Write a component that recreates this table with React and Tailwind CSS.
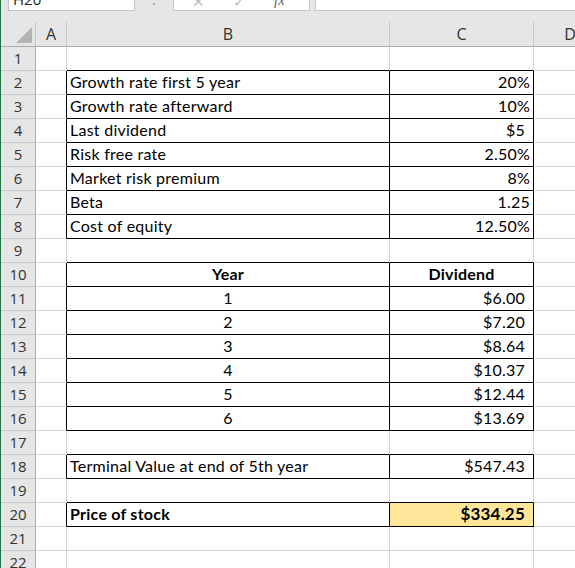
import React from "react";

const font = { fontFamily: "Lato, 'Open Sans', sans-serif" };

const rows = {
  2: { b: "Growth rate first 5 year", c: "20%" },
  3: { b: "Growth rate afterward", c: "10%" },
  4: { b: "Last dividend", c: "$5", pad: true },
  5: { b: "Risk free rate", c: "2.50%" },
  6: { b: "Market risk premium", c: "8%" },
  7: { b: "Beta", c: "1.25" },
  8: { b: "Cost of equity", c: "12.50%" },
  10: { b: "Year", c: "Dividend", header: true },
  11: { b: "1", c: "$6.00", center: true, pad: true },
  12: { b: "2", c: "$7.20", center: true, pad: true },
  13: { b: "3", c: "$8.64", center: true, pad: true },
  14: { b: "4", c: "$10.37", center: true, pad: true },
  15: { b: "5", c: "$12.44", center: true, pad: true },
  16: { b: "6", c: "$13.69", center: true, pad: true },
  18: { b: "Terminal Value at end of 5th year", c: "$547.43", pad: true },
  20: { b: "Price of stock", c: "$334.25", pad: true, total: true },
};

function inTable(r) {
  return !!rows[r];
}

function Row({ n }) {
  const d = rows[n];
  const boxed = inTable(n);
  const above = inTable(n + 1);
  const edge = boxed || above ? "border-b-black" : "border-b-[#d4d4d4]";
  const rightB = boxed ? "border-r-black" : "border-r-[#d4d4d4]";

  let bAlign = "justify-start pl-[3px]";
  let cAlign = d && d.pad ? "justify-end pr-[8px]" : "justify-end pr-[3px]";
  if (d && (d.header || d.center)) bAlign = "justify-center";
  if (d && d.header) cAlign = "justify-center";
  const bold = d && (d.header || d.total) ? "font-bold" : "";

  return (
    <div className="flex h-[24px]">
      <div className="w-[35px] shrink-0 flex items-center justify-center bg-[#e6e6e6] border-r border-b border-r-[#ababab] border-b-[#c8c8c8] text-[15px] text-[#333]" style={{ fontFamily: "'Open Sans', sans-serif" }}>
        {n}
      </div>
      <div className={`w-[31px] shrink-0 border-r border-b border-b-[#d4d4d4] ${rightB}`} />
      <div className={`w-[323px] shrink-0 flex items-end border-r border-b text-[16px] tracking-[0.25px] text-black ${rightB} ${edge} ${bAlign} ${bold}`} style={font}>
        {d ? d.b : ""}
      </div>
      <div className={`w-[144px] shrink-0 flex items-end border-r border-b tracking-[0.2px] text-black ${rightB} ${edge} ${cAlign} ${bold} ${d && d.total ? "bg-[#ffe699] text-[17px]" : "text-[16px]"}`} style={font}>
        {d ? d.c : ""}
      </div>
      <div className="flex-1 border-b border-b-[#d4d4d4]" />
    </div>
  );
}

export default function App() {
  const nums = [];
  for (let i = 1; i <= 22; i++) nums.push(i);

  return (
    <div className="w-[575px] h-[568px] overflow-hidden bg-white border-l border-l-[#217346]">
      <div className="h-[22px] bg-[#e6e6e6] flex items-start">
        <div className="ml-[7px] w-[127px] h-[11px] bg-white border border-t-0 border-[#c6c6c6] overflow-hidden">
          <div className="-mt-[12px] pl-[4px] text-[15px] text-[#222]" style={{ fontFamily: "'Open Sans', sans-serif" }}>H20</div>
        </div>
        <div className="w-[38px] h-[11px] flex justify-center overflow-hidden">
          <div className="-mt-[12px] text-[14px] text-[#999]">⋮</div>
        </div>
        <div className="w-[137px] h-[11px] bg-white border border-t-0 border-[#c6c6c6] overflow-hidden flex items-start text-[#bdbdbd]">
          <div className="ml-[18px] -mt-[10px] text-[15px]">✕</div>
          <div className="ml-[28px] -mt-[10px] text-[15px]">✓</div>
          <div className="ml-[28px] -mt-[11px] text-[15px] italic text-[#666]" style={{ fontFamily: "'Liberation Serif', serif" }}>fx</div>
        </div>
        <div className="ml-[5px] flex-1 h-[11px] bg-white border border-t-0 border-r-0 border-[#c6c6c6]" />
      </div>
      <div className="flex h-[25px] bg-[#e6e6e6] border-b border-b-[#ababab] text-[16px] text-[#333]" style={{ fontFamily: "'Open Sans', sans-serif" }}>
        <div className="w-[35px] shrink-0 border-r border-r-[#c6c6c6] flex items-end justify-end pr-[3px] pb-[3px]">
          <svg width="16" height="16" viewBox="0 0 16 16">
            <polygon points="16,0 16,16 0,16" fill="#b4b4b4" />
          </svg>
        </div>
        <div className="w-[31px] shrink-0 border-r border-r-[#c6c6c6] flex items-center justify-center">A</div>
        <div className="w-[323px] shrink-0 border-r border-r-[#c6c6c6] flex items-center justify-center">B</div>
        <div className="w-[144px] shrink-0 border-r border-r-[#c6c6c6] flex items-center justify-center">C</div>
        <div className="w-[72px] shrink-0 flex items-center justify-center">D</div>
      </div>
      {nums.map((n) => (
        <Row key={n} n={n} />
      ))}
    </div>
  );
}
